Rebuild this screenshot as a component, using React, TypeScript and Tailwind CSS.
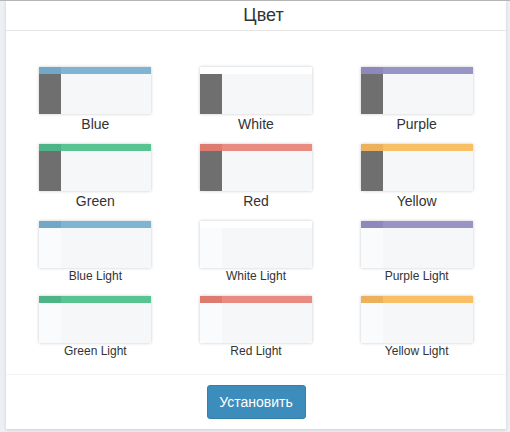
import React from "react";

type Skin = {
  name: string;
  logo: string;
  bar: string;
  light: boolean;
};

const skins: Skin[] = [
  { name: "Blue", logo: "bg-[#72a8c7]", bar: "bg-[#80b4d3]", light: false },
  { name: "White", logo: "bg-[#ffffff]", bar: "bg-[#ffffff]", light: false },
  { name: "Purple", logo: "bg-[#8d89bd]", bar: "bg-[#9894c6]", light: false },
  { name: "Green", logo: "bg-[#4db487]", bar: "bg-[#57c491]", light: false },
  { name: "Red", logo: "bg-[#dd7b71]", bar: "bg-[#e98b80]", light: false },
  { name: "Yellow", logo: "bg-[#ecb15b]", bar: "bg-[#f8bf64]", light: false },
  { name: "Blue Light", logo: "bg-[#72a8c7]", bar: "bg-[#80b4d3]", light: true },
  { name: "White Light", logo: "bg-[#ffffff]", bar: "bg-[#ffffff]", light: true },
  { name: "Purple Light", logo: "bg-[#8d89bd]", bar: "bg-[#9894c6]", light: true },
  { name: "Green Light", logo: "bg-[#4db487]", bar: "bg-[#57c491]", light: true },
  { name: "Red Light", logo: "bg-[#dd7b71]", bar: "bg-[#e98b80]", light: true },
  { name: "Yellow Light", logo: "bg-[#ecb15b]", bar: "bg-[#f8bf64]", light: true },
];

const Thumb = ({ skin }: { skin: Skin }) => (
  <div className="flex h-[47px] w-[112px] flex-col overflow-hidden bg-white shadow-[0_0_3px_rgba(0,0,0,0.22)]">
    <div className="flex h-[7px] shrink-0">
      <div className={`w-[22px] ${skin.logo}`} />
      <div className={`flex-1 ${skin.bar}`} />
    </div>
    <div className="flex flex-1">
      <div className={`w-[22px] ${skin.light ? "bg-[#fafbfc]" : "bg-[#6f6f6f]"}`} />
      <div className="flex-1 bg-[#f6f7f9]" />
    </div>
  </div>
);

const SkinCell = ({ skin }: { skin: Skin }) => (
  <div className="flex flex-col items-center">
    <Thumb skin={skin} />
    {skin.light ? (
      <div className="h-[28px] text-[12px] leading-[17px] text-[#333]">{skin.name}</div>
    ) : (
      <div className="h-[30px] text-[14px] leading-[20px] text-[#333]">{skin.name}</div>
    )}
  </div>
);

export default function App() {
  return (
    <div
      className="h-[432px] w-[510px] overflow-hidden border-t border-[#b5b5b5] bg-[#ecf0f5]"
      style={{ fontFamily: '"Liberation Sans", Arial, sans-serif' }}
    >
      <div className="ml-[6px] w-[500px] bg-white shadow-[0_1px_3px_rgba(0,0,0,0.15)]">
        <div className="flex h-[30px] items-center justify-center border-b border-[#e5e5e5] pl-[15px] text-[18px] text-[#333]">
          Цвет
        </div>
        <div className="grid grid-cols-3 px-[9px] pb-[3px] pt-[36px]">
          {skins.map((s) => (
            <SkinCell key={s.name} skin={s} />
          ))}
        </div>
        <div className="flex h-[55px] items-center justify-center border-t border-[#f4f4f4]">
          <button className="h-[34px] w-[99px] rounded-[3px] border border-[#367fa9] bg-[#3c8dbc] text-[14px] text-white">
            Установить
          </button>
        </div>
      </div>
    </div>
  );
}
